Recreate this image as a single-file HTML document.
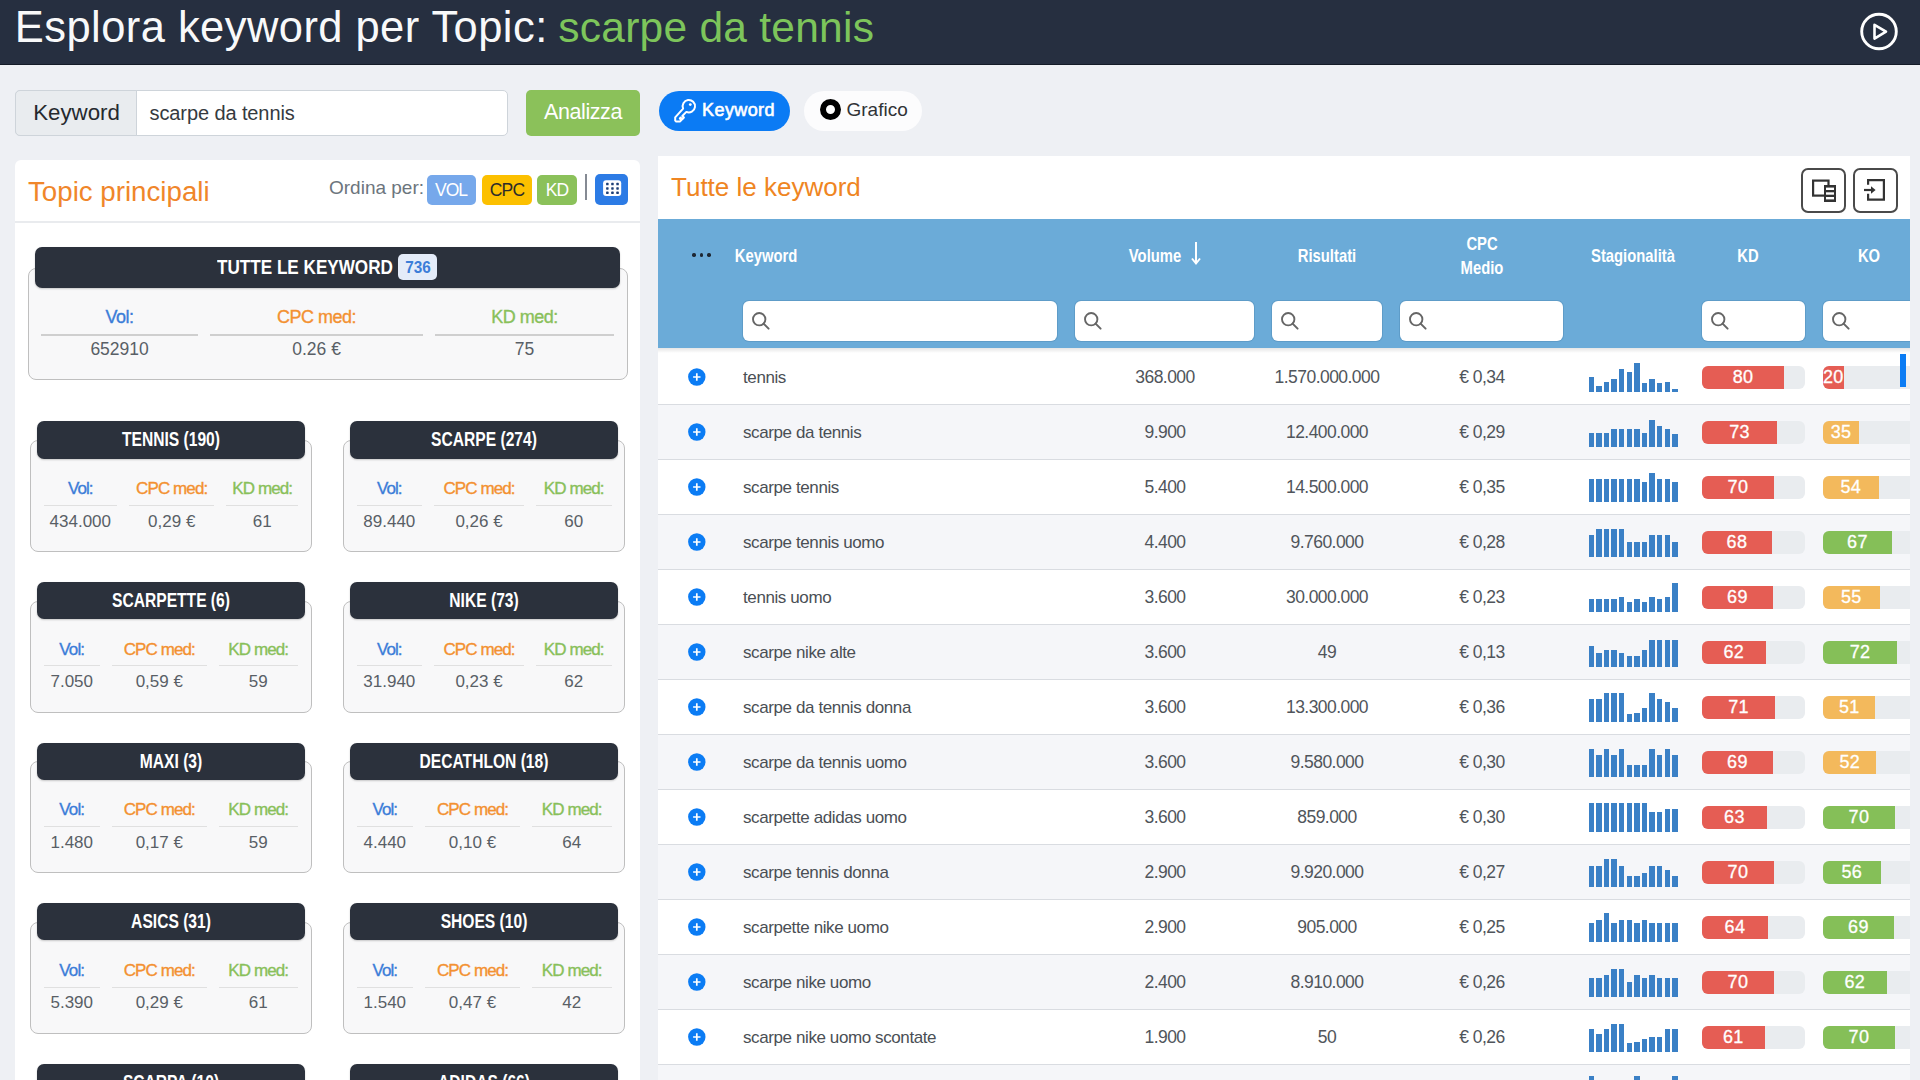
<!DOCTYPE html>
<html><head><meta charset="utf-8"><style>
html,body{margin:0;padding:0;}
body{width:1920px;height:1080px;overflow:hidden;position:relative;background:#eef0f4;font-family:"Liberation Sans", sans-serif;}
.t{position:absolute;white-space:nowrap;line-height:1;}
.r{position:absolute;}
.st{position:absolute;border-collapse:separate;}
.st td{padding:0;text-align:center;white-space:nowrap;vertical-align:top;}
</style></head><body>
<div class="r" style="left:0.0px;top:0.0px;width:1920.0px;height:64.0px;background:#262f40;"></div>
<div class="r" style="left:0.0px;top:64.0px;width:1920.0px;height:1.0px;background:#141b27;"></div>
<div class="t" style="left:14.8px;top:6.4px;font-size:43.5px;color:#f8f9fa;font-weight:normal;letter-spacing:0.44px;">Esplora keyword per Topic:</div>
<div class="t" style="left:558.3px;top:7.2px;font-size:42.5px;color:#7dc55b;font-weight:normal;letter-spacing:0.25px;">scarpe da tennis</div>
<svg class="r" style="left:1858px;top:11px" width="42" height="42" viewBox="0 0 42 42"><circle cx="21" cy="20.5" r="17.3" fill="none" stroke="#fff" stroke-width="2.9"/><path d="M16.5 13.8 L28 20.6 L16.5 27.6 Z" fill="none" stroke="#fff" stroke-width="2.6" stroke-linejoin="round"/></svg>
<div class="r" style="left:15.0px;top:90.0px;width:493.0px;height:46.0px;background:#ffffff;border:1px solid #ced4da;border-radius:5px;box-sizing:border-box;"></div>
<div class="r" style="left:15.0px;top:90.0px;width:122.0px;height:46.0px;background:#e9ecef;border:1px solid #ced4da;border-radius:5px 0 0 5px;box-sizing:border-box;"></div>
<div class="t" style="left:-23.5px;width:200px;text-align:center;top:101.9px;font-size:22.3px;color:#25292e;font-weight:normal;">Keyword</div>
<div class="t" style="left:149.5px;top:103.1px;font-size:20px;color:#353a40;font-weight:normal;letter-spacing:-0.1px;">scarpe da tennis</div>
<div class="r" style="left:526.0px;top:90.0px;width:114.0px;height:46.0px;background:#8bc15a;border-radius:5px;"></div>
<div class="t" style="left:483.0px;width:200px;text-align:center;top:101.8px;font-size:21.5px;color:#ffffff;font-weight:normal;letter-spacing:-0.4px;">Analizza</div>
<div class="r" style="left:659.0px;top:91.0px;width:131.0px;height:40.0px;background:#0b7bf4;border-radius:20px;"></div>
<svg class="r" style="left:671px;top:96.8px" width="28" height="28" viewBox="0 0 28 28"><path d="M12.10 11.64 A6.2 6.2 0 1 1 15.36 14.90 L11.29 18.96 L12.92 20.58 L11.29 22.21 L9.67 20.58 L8.82 21.43 L10.45 23.06 L8.89 24.61 L5.2 24.61 L4.2 23.6 L4.2 20.30 Z" fill="none" stroke="#fff" stroke-width="2" stroke-linejoin="round"/><circle cx="19.3" cy="7.6" r="1.4" fill="#fff"/></svg>
<div class="t" style="left:638.5px;width:200px;text-align:center;top:101.4px;font-size:18px;color:#ffffff;font-weight:normal;letter-spacing:0.4px;-webkit-text-stroke:0.6px #fff;">Keyword</div>
<div class="r" style="left:804.0px;top:91.0px;width:118.0px;height:40.0px;background:#fcfcfd;border-radius:20px;"></div>
<div class="r" style="left:819.5px;top:98.8px;width:21px;height:21px;border-radius:50%;box-sizing:border-box;border:6.5px solid #000;background:#fff"></div>
<div class="t" style="left:846.5px;top:100.4px;font-size:19px;color:#303336;font-weight:normal;">Grafico</div>
<div class="r" style="left:15.0px;top:160.0px;width:625.0px;height:940.0px;background:#ffffff;border-radius:6px;"></div>
<div class="r" style="left:15.0px;top:221.0px;width:625.0px;height:2.0px;background:#e9ebee;"></div>
<div class="t" style="left:28.0px;top:177.6px;font-size:27.7px;color:#f0862a;font-weight:normal;">Topic principali</div>
<div class="t" style="left:329.0px;top:178.4px;font-size:19px;color:#6c757d;font-weight:normal;">Ordina per:</div>
<div class="r" style="left:427.0px;top:174.5px;width:48.5px;height:30.0px;background:#76a8eb;border-radius:5px;"></div>
<div class="t" style="left:421.0px;width:60px;text-align:center;top:182.2px;font-size:17.5px;color:#ffffff;font-weight:normal;letter-spacing:-1px;">VOL</div>
<div class="r" style="left:481.5px;top:174.5px;width:50.5px;height:30.0px;background:#fcc000;border-radius:5px;"></div>
<div class="t" style="left:477.0px;width:60px;text-align:center;top:182.2px;font-size:17.5px;color:#2b2b2b;font-weight:normal;letter-spacing:-0.8px;">CPC</div>
<div class="r" style="left:537.0px;top:174.5px;width:40.0px;height:30.0px;background:#8bc15a;border-radius:5px;"></div>
<div class="t" style="left:527.0px;width:60px;text-align:center;top:182.2px;font-size:17.5px;color:#ffffff;font-weight:normal;letter-spacing:-0.8px;">KD</div>
<div class="r" style="left:585.0px;top:174.0px;width:2.0px;height:25.5px;background:#858a93;"></div>
<div class="r" style="left:595.0px;top:174.0px;width:33.0px;height:30.5px;background:#2c7be5;border-radius:5px;"></div>
<svg class="r" style="left:601px;top:179px" width="22" height="22" viewBox="0 0 22 22"><rect x="2.1" y="1.3" width="18.1" height="15.7" rx="3" fill="#fff"/><rect x="5.1" y="3.8" width="2.5" height="2.5" rx="0.6" fill="#1d3f77"/><rect x="5.1" y="8.2" width="2.5" height="2.5" rx="0.6" fill="#1d3f77"/><rect x="5.1" y="12.6" width="2.5" height="2.5" rx="0.6" fill="#1d3f77"/><rect x="10.2" y="3.8" width="2.5" height="2.5" rx="0.6" fill="#1d3f77"/><rect x="10.2" y="8.2" width="2.5" height="2.5" rx="0.6" fill="#1d3f77"/><rect x="10.2" y="12.6" width="2.5" height="2.5" rx="0.6" fill="#1d3f77"/><rect x="15.3" y="3.8" width="2.5" height="2.5" rx="0.6" fill="#1d3f77"/><rect x="15.3" y="8.2" width="2.5" height="2.5" rx="0.6" fill="#1d3f77"/><rect x="15.3" y="12.6" width="2.5" height="2.5" rx="0.6" fill="#1d3f77"/></svg>
<div class="r" style="left:27.5px;top:268.3px;width:600.0px;height:111.7px;background:#f8f8f9;border:1.5px solid #bfbfbf;border-radius:8px;box-sizing:border-box;"></div>
<div class="r" style="left:34.7px;top:247.0px;width:585.3px;height:40.5px;background:#2b313c;border-radius:7px;box-shadow:0 1px 2px rgba(0,0,0,0.2);"></div>
<div class="t" style="left:34.7px;width:585.3px;text-align:center;top:256.4px;font-size:21px;color:#fff;font-weight:bold;transform:scaleX(0.8);"></div>
<table class="st" style="left:29.0px;width:597.0px;top:308.3px;border-spacing:12px 0"><tr><td style="color:#3b7dd8;font-size:18px;line-height:18px;padding-bottom:7.4px;border-bottom:2px solid #cfcfcf;letter-spacing:-0.5px;-webkit-text-stroke:0.35px #3b7dd8">Vol:</td><td style="color:#f39131;font-size:18px;line-height:18px;padding-bottom:7.4px;border-bottom:2px solid #cfcfcf;letter-spacing:-0.5px;-webkit-text-stroke:0.35px #f39131">CPC med:</td><td style="color:#89c05a;font-size:18px;line-height:18px;padding-bottom:7.4px;border-bottom:2px solid #cfcfcf;letter-spacing:-0.5px;-webkit-text-stroke:0.35px #89c05a">KD med:</td></tr><tr><td style="color:#595f66;font-size:17.5px;line-height:17.5px;padding-top:5.5px">652910</td><td style="color:#595f66;font-size:17.5px;line-height:17.5px;padding-top:5.5px">0.26 €</td><td style="color:#595f66;font-size:17.5px;line-height:17.5px;padding-top:5.5px">75</td></tr></table>
<div class="t" style="left:216.5px;top:255.9px;font-size:21px;color:#ffffff;font-weight:bold;transform:scaleX(0.815);transform-origin:left center;">TUTTE LE KEYWORD</div>
<div class="r" style="left:398.3px;top:254.0px;width:39.2px;height:26.3px;background:#e4ecf9;border-radius:5px;"></div>
<div class="t" style="left:388.0px;width:60px;text-align:center;top:258.9px;font-size:17px;color:#3b7dd8;font-weight:bold;transform:scaleX(0.9);">736</div>
<div class="r" style="left:30.0px;top:440.2px;width:281.5px;height:112.1px;background:#f8f8f9;border:1.5px solid #bfbfbf;border-radius:8px;box-sizing:border-box;"></div>
<div class="r" style="left:37.0px;top:421.3px;width:268.0px;height:37.3px;background:#2b313c;border-radius:7px;box-shadow:0 1px 2px rgba(0,0,0,0.2);"></div>
<div class="t" style="left:37.0px;width:268.0px;text-align:center;top:429.4px;font-size:20px;color:#fff;font-weight:bold;transform:scaleX(0.78);">TENNIS (190)</div>
<table class="st" style="left:31.5px;width:278.5px;top:480.1px;border-spacing:12px 0"><tr><td style="color:#3b7dd8;font-size:17px;line-height:17px;padding-bottom:7.8px;border-bottom:1.5px solid #e0e0e0;letter-spacing:-0.9px;-webkit-text-stroke:0.35px #3b7dd8">Vol:</td><td style="color:#f39131;font-size:17px;line-height:17px;padding-bottom:7.8px;border-bottom:1.5px solid #e0e0e0;letter-spacing:-0.9px;-webkit-text-stroke:0.35px #f39131">CPC med:</td><td style="color:#89c05a;font-size:17px;line-height:17px;padding-bottom:7.8px;border-bottom:1.5px solid #e0e0e0;letter-spacing:-0.9px;-webkit-text-stroke:0.35px #89c05a">KD med:</td></tr><tr><td style="color:#595f66;font-size:17px;line-height:17px;padding-top:6.7px">434.000</td><td style="color:#595f66;font-size:17px;line-height:17px;padding-top:6.7px">0,29 €</td><td style="color:#595f66;font-size:17px;line-height:17px;padding-top:6.7px">61</td></tr></table>
<div class="r" style="left:343.0px;top:440.2px;width:282.0px;height:112.1px;background:#f8f8f9;border:1.5px solid #bfbfbf;border-radius:8px;box-sizing:border-box;"></div>
<div class="r" style="left:350.0px;top:421.3px;width:268.0px;height:37.3px;background:#2b313c;border-radius:7px;box-shadow:0 1px 2px rgba(0,0,0,0.2);"></div>
<div class="t" style="left:350.0px;width:268.0px;text-align:center;top:429.4px;font-size:20px;color:#fff;font-weight:bold;transform:scaleX(0.78);">SCARPE (274)</div>
<table class="st" style="left:344.5px;width:279.0px;top:480.1px;border-spacing:12px 0"><tr><td style="color:#3b7dd8;font-size:17px;line-height:17px;padding-bottom:7.8px;border-bottom:1.5px solid #e0e0e0;letter-spacing:-0.9px;-webkit-text-stroke:0.35px #3b7dd8">Vol:</td><td style="color:#f39131;font-size:17px;line-height:17px;padding-bottom:7.8px;border-bottom:1.5px solid #e0e0e0;letter-spacing:-0.9px;-webkit-text-stroke:0.35px #f39131">CPC med:</td><td style="color:#89c05a;font-size:17px;line-height:17px;padding-bottom:7.8px;border-bottom:1.5px solid #e0e0e0;letter-spacing:-0.9px;-webkit-text-stroke:0.35px #89c05a">KD med:</td></tr><tr><td style="color:#595f66;font-size:17px;line-height:17px;padding-top:6.7px">89.440</td><td style="color:#595f66;font-size:17px;line-height:17px;padding-top:6.7px">0,26 €</td><td style="color:#595f66;font-size:17px;line-height:17px;padding-top:6.7px">60</td></tr></table>
<div class="r" style="left:30.0px;top:600.8px;width:281.5px;height:112.1px;background:#f8f8f9;border:1.5px solid #bfbfbf;border-radius:8px;box-sizing:border-box;"></div>
<div class="r" style="left:37.0px;top:581.9px;width:268.0px;height:37.3px;background:#2b313c;border-radius:7px;box-shadow:0 1px 2px rgba(0,0,0,0.2);"></div>
<div class="t" style="left:37.0px;width:268.0px;text-align:center;top:590.0px;font-size:20px;color:#fff;font-weight:bold;transform:scaleX(0.78);">SCARPETTE (6)</div>
<table class="st" style="left:31.5px;width:278.5px;top:640.7px;border-spacing:12px 0"><tr><td style="color:#3b7dd8;font-size:17px;line-height:17px;padding-bottom:7.8px;border-bottom:1.5px solid #e0e0e0;letter-spacing:-0.9px;-webkit-text-stroke:0.35px #3b7dd8">Vol:</td><td style="color:#f39131;font-size:17px;line-height:17px;padding-bottom:7.8px;border-bottom:1.5px solid #e0e0e0;letter-spacing:-0.9px;-webkit-text-stroke:0.35px #f39131">CPC med:</td><td style="color:#89c05a;font-size:17px;line-height:17px;padding-bottom:7.8px;border-bottom:1.5px solid #e0e0e0;letter-spacing:-0.9px;-webkit-text-stroke:0.35px #89c05a">KD med:</td></tr><tr><td style="color:#595f66;font-size:17px;line-height:17px;padding-top:6.7px">7.050</td><td style="color:#595f66;font-size:17px;line-height:17px;padding-top:6.7px">0,59 €</td><td style="color:#595f66;font-size:17px;line-height:17px;padding-top:6.7px">59</td></tr></table>
<div class="r" style="left:343.0px;top:600.8px;width:282.0px;height:112.1px;background:#f8f8f9;border:1.5px solid #bfbfbf;border-radius:8px;box-sizing:border-box;"></div>
<div class="r" style="left:350.0px;top:581.9px;width:268.0px;height:37.3px;background:#2b313c;border-radius:7px;box-shadow:0 1px 2px rgba(0,0,0,0.2);"></div>
<div class="t" style="left:350.0px;width:268.0px;text-align:center;top:590.0px;font-size:20px;color:#fff;font-weight:bold;transform:scaleX(0.78);">NIKE (73)</div>
<table class="st" style="left:344.5px;width:279.0px;top:640.7px;border-spacing:12px 0"><tr><td style="color:#3b7dd8;font-size:17px;line-height:17px;padding-bottom:7.8px;border-bottom:1.5px solid #e0e0e0;letter-spacing:-0.9px;-webkit-text-stroke:0.35px #3b7dd8">Vol:</td><td style="color:#f39131;font-size:17px;line-height:17px;padding-bottom:7.8px;border-bottom:1.5px solid #e0e0e0;letter-spacing:-0.9px;-webkit-text-stroke:0.35px #f39131">CPC med:</td><td style="color:#89c05a;font-size:17px;line-height:17px;padding-bottom:7.8px;border-bottom:1.5px solid #e0e0e0;letter-spacing:-0.9px;-webkit-text-stroke:0.35px #89c05a">KD med:</td></tr><tr><td style="color:#595f66;font-size:17px;line-height:17px;padding-top:6.7px">31.940</td><td style="color:#595f66;font-size:17px;line-height:17px;padding-top:6.7px">0,23 €</td><td style="color:#595f66;font-size:17px;line-height:17px;padding-top:6.7px">62</td></tr></table>
<div class="r" style="left:30.0px;top:761.4px;width:281.5px;height:112.1px;background:#f8f8f9;border:1.5px solid #bfbfbf;border-radius:8px;box-sizing:border-box;"></div>
<div class="r" style="left:37.0px;top:742.5px;width:268.0px;height:37.3px;background:#2b313c;border-radius:7px;box-shadow:0 1px 2px rgba(0,0,0,0.2);"></div>
<div class="t" style="left:37.0px;width:268.0px;text-align:center;top:750.6px;font-size:20px;color:#fff;font-weight:bold;transform:scaleX(0.78);">MAXI (3)</div>
<table class="st" style="left:31.5px;width:278.5px;top:801.3px;border-spacing:12px 0"><tr><td style="color:#3b7dd8;font-size:17px;line-height:17px;padding-bottom:7.8px;border-bottom:1.5px solid #e0e0e0;letter-spacing:-0.9px;-webkit-text-stroke:0.35px #3b7dd8">Vol:</td><td style="color:#f39131;font-size:17px;line-height:17px;padding-bottom:7.8px;border-bottom:1.5px solid #e0e0e0;letter-spacing:-0.9px;-webkit-text-stroke:0.35px #f39131">CPC med:</td><td style="color:#89c05a;font-size:17px;line-height:17px;padding-bottom:7.8px;border-bottom:1.5px solid #e0e0e0;letter-spacing:-0.9px;-webkit-text-stroke:0.35px #89c05a">KD med:</td></tr><tr><td style="color:#595f66;font-size:17px;line-height:17px;padding-top:6.7px">1.480</td><td style="color:#595f66;font-size:17px;line-height:17px;padding-top:6.7px">0,17 €</td><td style="color:#595f66;font-size:17px;line-height:17px;padding-top:6.7px">59</td></tr></table>
<div class="r" style="left:343.0px;top:761.4px;width:282.0px;height:112.1px;background:#f8f8f9;border:1.5px solid #bfbfbf;border-radius:8px;box-sizing:border-box;"></div>
<div class="r" style="left:350.0px;top:742.5px;width:268.0px;height:37.3px;background:#2b313c;border-radius:7px;box-shadow:0 1px 2px rgba(0,0,0,0.2);"></div>
<div class="t" style="left:350.0px;width:268.0px;text-align:center;top:750.6px;font-size:20px;color:#fff;font-weight:bold;transform:scaleX(0.78);">DECATHLON (18)</div>
<table class="st" style="left:344.5px;width:279.0px;top:801.3px;border-spacing:12px 0"><tr><td style="color:#3b7dd8;font-size:17px;line-height:17px;padding-bottom:7.8px;border-bottom:1.5px solid #e0e0e0;letter-spacing:-0.9px;-webkit-text-stroke:0.35px #3b7dd8">Vol:</td><td style="color:#f39131;font-size:17px;line-height:17px;padding-bottom:7.8px;border-bottom:1.5px solid #e0e0e0;letter-spacing:-0.9px;-webkit-text-stroke:0.35px #f39131">CPC med:</td><td style="color:#89c05a;font-size:17px;line-height:17px;padding-bottom:7.8px;border-bottom:1.5px solid #e0e0e0;letter-spacing:-0.9px;-webkit-text-stroke:0.35px #89c05a">KD med:</td></tr><tr><td style="color:#595f66;font-size:17px;line-height:17px;padding-top:6.7px">4.440</td><td style="color:#595f66;font-size:17px;line-height:17px;padding-top:6.7px">0,10 €</td><td style="color:#595f66;font-size:17px;line-height:17px;padding-top:6.7px">64</td></tr></table>
<div class="r" style="left:30.0px;top:922.0px;width:281.5px;height:112.1px;background:#f8f8f9;border:1.5px solid #bfbfbf;border-radius:8px;box-sizing:border-box;"></div>
<div class="r" style="left:37.0px;top:903.1px;width:268.0px;height:37.3px;background:#2b313c;border-radius:7px;box-shadow:0 1px 2px rgba(0,0,0,0.2);"></div>
<div class="t" style="left:37.0px;width:268.0px;text-align:center;top:911.2px;font-size:20px;color:#fff;font-weight:bold;transform:scaleX(0.78);">ASICS (31)</div>
<table class="st" style="left:31.5px;width:278.5px;top:961.9px;border-spacing:12px 0"><tr><td style="color:#3b7dd8;font-size:17px;line-height:17px;padding-bottom:7.8px;border-bottom:1.5px solid #e0e0e0;letter-spacing:-0.9px;-webkit-text-stroke:0.35px #3b7dd8">Vol:</td><td style="color:#f39131;font-size:17px;line-height:17px;padding-bottom:7.8px;border-bottom:1.5px solid #e0e0e0;letter-spacing:-0.9px;-webkit-text-stroke:0.35px #f39131">CPC med:</td><td style="color:#89c05a;font-size:17px;line-height:17px;padding-bottom:7.8px;border-bottom:1.5px solid #e0e0e0;letter-spacing:-0.9px;-webkit-text-stroke:0.35px #89c05a">KD med:</td></tr><tr><td style="color:#595f66;font-size:17px;line-height:17px;padding-top:6.7px">5.390</td><td style="color:#595f66;font-size:17px;line-height:17px;padding-top:6.7px">0,29 €</td><td style="color:#595f66;font-size:17px;line-height:17px;padding-top:6.7px">61</td></tr></table>
<div class="r" style="left:343.0px;top:922.0px;width:282.0px;height:112.1px;background:#f8f8f9;border:1.5px solid #bfbfbf;border-radius:8px;box-sizing:border-box;"></div>
<div class="r" style="left:350.0px;top:903.1px;width:268.0px;height:37.3px;background:#2b313c;border-radius:7px;box-shadow:0 1px 2px rgba(0,0,0,0.2);"></div>
<div class="t" style="left:350.0px;width:268.0px;text-align:center;top:911.2px;font-size:20px;color:#fff;font-weight:bold;transform:scaleX(0.78);">SHOES (10)</div>
<table class="st" style="left:344.5px;width:279.0px;top:961.9px;border-spacing:12px 0"><tr><td style="color:#3b7dd8;font-size:17px;line-height:17px;padding-bottom:7.8px;border-bottom:1.5px solid #e0e0e0;letter-spacing:-0.9px;-webkit-text-stroke:0.35px #3b7dd8">Vol:</td><td style="color:#f39131;font-size:17px;line-height:17px;padding-bottom:7.8px;border-bottom:1.5px solid #e0e0e0;letter-spacing:-0.9px;-webkit-text-stroke:0.35px #f39131">CPC med:</td><td style="color:#89c05a;font-size:17px;line-height:17px;padding-bottom:7.8px;border-bottom:1.5px solid #e0e0e0;letter-spacing:-0.9px;-webkit-text-stroke:0.35px #89c05a">KD med:</td></tr><tr><td style="color:#595f66;font-size:17px;line-height:17px;padding-top:6.7px">1.540</td><td style="color:#595f66;font-size:17px;line-height:17px;padding-top:6.7px">0,47 €</td><td style="color:#595f66;font-size:17px;line-height:17px;padding-top:6.7px">42</td></tr></table>
<div class="r" style="left:30.0px;top:1082.6px;width:281.5px;height:112.1px;background:#f8f8f9;border:1.5px solid #bfbfbf;border-radius:8px;box-sizing:border-box;"></div>
<div class="r" style="left:37.0px;top:1063.7px;width:268.0px;height:37.3px;background:#2b313c;border-radius:7px;box-shadow:0 1px 2px rgba(0,0,0,0.2);"></div>
<div class="t" style="left:37.0px;width:268.0px;text-align:center;top:1071.8px;font-size:20px;color:#fff;font-weight:bold;transform:scaleX(0.78);">SCARPA (10)</div>
<table class="st" style="left:31.5px;width:278.5px;top:1122.5px;border-spacing:12px 0"><tr><td style="color:#3b7dd8;font-size:17px;line-height:17px;padding-bottom:7.8px;border-bottom:1.5px solid #e0e0e0;letter-spacing:-0.9px;-webkit-text-stroke:0.35px #3b7dd8">Vol:</td><td style="color:#f39131;font-size:17px;line-height:17px;padding-bottom:7.8px;border-bottom:1.5px solid #e0e0e0;letter-spacing:-0.9px;-webkit-text-stroke:0.35px #f39131">CPC med:</td><td style="color:#89c05a;font-size:17px;line-height:17px;padding-bottom:7.8px;border-bottom:1.5px solid #e0e0e0;letter-spacing:-0.9px;-webkit-text-stroke:0.35px #89c05a">KD med:</td></tr><tr><td style="color:#595f66;font-size:17px;line-height:17px;padding-top:6.7px"></td><td style="color:#595f66;font-size:17px;line-height:17px;padding-top:6.7px"></td><td style="color:#595f66;font-size:17px;line-height:17px;padding-top:6.7px"></td></tr></table>
<div class="r" style="left:343.0px;top:1082.6px;width:282.0px;height:112.1px;background:#f8f8f9;border:1.5px solid #bfbfbf;border-radius:8px;box-sizing:border-box;"></div>
<div class="r" style="left:350.0px;top:1063.7px;width:268.0px;height:37.3px;background:#2b313c;border-radius:7px;box-shadow:0 1px 2px rgba(0,0,0,0.2);"></div>
<div class="t" style="left:350.0px;width:268.0px;text-align:center;top:1071.8px;font-size:20px;color:#fff;font-weight:bold;transform:scaleX(0.78);">ADIDAS (66)</div>
<table class="st" style="left:344.5px;width:279.0px;top:1122.5px;border-spacing:12px 0"><tr><td style="color:#3b7dd8;font-size:17px;line-height:17px;padding-bottom:7.8px;border-bottom:1.5px solid #e0e0e0;letter-spacing:-0.9px;-webkit-text-stroke:0.35px #3b7dd8">Vol:</td><td style="color:#f39131;font-size:17px;line-height:17px;padding-bottom:7.8px;border-bottom:1.5px solid #e0e0e0;letter-spacing:-0.9px;-webkit-text-stroke:0.35px #f39131">CPC med:</td><td style="color:#89c05a;font-size:17px;line-height:17px;padding-bottom:7.8px;border-bottom:1.5px solid #e0e0e0;letter-spacing:-0.9px;-webkit-text-stroke:0.35px #89c05a">KD med:</td></tr><tr><td style="color:#595f66;font-size:17px;line-height:17px;padding-top:6.7px"></td><td style="color:#595f66;font-size:17px;line-height:17px;padding-top:6.7px"></td><td style="color:#595f66;font-size:17px;line-height:17px;padding-top:6.7px"></td></tr></table>
<div class="r" style="left:658.0px;top:156.0px;width:1252.0px;height:944.0px;background:#ffffff;"></div>
<div class="t" style="left:671.0px;top:173.5px;font-size:26px;color:#ef8522;font-weight:normal;">Tutte le keyword</div>
<div class="r" style="left:1801.0px;top:168.0px;width:45.0px;height:45.0px;background:transparent;border:2px solid #4a4a4a;border-radius:7px;box-sizing:border-box;"></div>
<div class="r" style="left:1853.3px;top:168.0px;width:45.0px;height:45.0px;background:transparent;border:2px solid #4a4a4a;border-radius:7px;box-sizing:border-box;"></div>
<svg class="r" style="left:1800px;top:160px" width="110" height="60" viewBox="1800 160 110 60"><rect x="1813.1" y="180.6" width="15.4" height="15" fill="none" stroke="#333" stroke-width="2.2"/><rect x="1824" y="185" width="12" height="17" fill="#333"/><rect x="1826" y="187.6" width="8" height="2.4" fill="#fff"/><rect x="1826" y="192.3" width="8" height="2.4" fill="#fff"/><rect x="1826" y="197" width="8" height="2.4" fill="#fff"/><path d="M1868.1 184.8 V180.1 H1883.9 V199.6 H1868.1 V193.7" fill="none" stroke="#333" stroke-width="2.2"/><path d="M1864 190 H1872" stroke="#333" stroke-width="2.2"/><path d="M1871 186.2 L1875.6 190 L1871 193.8 Z" fill="#333"/></svg>
<div class="r" style="left:658.0px;top:219.0px;width:1252.0px;height:129.0px;background:#6babd8;"></div>
<div class="t" style="left:665.5px;width:200px;text-align:center;top:247.0px;font-size:18.5px;color:#ffffff;font-weight:bold;transform:scaleX(0.8);">Keyword</div>
<div class="t" style="left:1054.5px;width:200px;text-align:center;top:247.0px;font-size:18.5px;color:#ffffff;font-weight:bold;transform:scaleX(0.8);">Volume</div>
<svg class="r" style="left:1190px;top:240px" width="12" height="26" viewBox="0 0 12 26"><path d="M6 2 V23 M2 18.5 L6 23.5 L10 18.5" fill="none" stroke="#fff" stroke-width="2"/></svg>
<div class="t" style="left:1227.0px;width:200px;text-align:center;top:247.0px;font-size:18.5px;color:#ffffff;font-weight:bold;transform:scaleX(0.8);">Risultati</div>
<div class="t" style="left:1382.0px;width:200px;text-align:center;top:235.0px;font-size:18.5px;color:#ffffff;font-weight:bold;transform:scaleX(0.8);">CPC</div>
<div class="t" style="left:1382.0px;width:200px;text-align:center;top:259.0px;font-size:18.5px;color:#ffffff;font-weight:bold;transform:scaleX(0.8);">Medio</div>
<div class="t" style="left:1532.7px;width:200px;text-align:center;top:247.0px;font-size:18.5px;color:#ffffff;font-weight:bold;transform:scaleX(0.8);">Stagionalità</div>
<div class="t" style="left:1648.0px;width:200px;text-align:center;top:247.0px;font-size:18.5px;color:#ffffff;font-weight:bold;transform:scaleX(0.8);">KD</div>
<div class="t" style="left:1768.7px;width:200px;text-align:center;top:247.0px;font-size:18.5px;color:#ffffff;font-weight:bold;transform:scaleX(0.8);">KO</div>
<div class="r" style="left:692.2px;top:253.2px;width:3.4px;height:3.4px;background:#1d2733;border-radius:50%;"></div>
<div class="r" style="left:699.8px;top:253.2px;width:3.4px;height:3.4px;background:#1d2733;border-radius:50%;"></div>
<div class="r" style="left:707.4px;top:253.2px;width:3.4px;height:3.4px;background:#1d2733;border-radius:50%;"></div>
<div class="r" style="left:742.5px;top:301.0px;width:314.5px;height:40.2px;background:#ffffff;border-radius:6px;box-shadow:0 0 0 1px rgba(40,90,130,0.18);"></div>
<svg class="r" style="left:749.7px;top:310px" width="22" height="22" viewBox="0 0 22 22"><circle cx="9.2" cy="9.2" r="6.2" fill="none" stroke="#666" stroke-width="1.9"/><path d="M13.6 13.6 L18.6 18.6" stroke="#666" stroke-width="2" stroke-linecap="round"/></svg>
<div class="r" style="left:1075.0px;top:301.0px;width:179.0px;height:40.2px;background:#ffffff;border-radius:6px;box-shadow:0 0 0 1px rgba(40,90,130,0.18);"></div>
<svg class="r" style="left:1082.2px;top:310px" width="22" height="22" viewBox="0 0 22 22"><circle cx="9.2" cy="9.2" r="6.2" fill="none" stroke="#666" stroke-width="1.9"/><path d="M13.6 13.6 L18.6 18.6" stroke="#666" stroke-width="2" stroke-linecap="round"/></svg>
<div class="r" style="left:1272.0px;top:301.0px;width:110.0px;height:40.2px;background:#ffffff;border-radius:6px;box-shadow:0 0 0 1px rgba(40,90,130,0.18);"></div>
<svg class="r" style="left:1279.2px;top:310px" width="22" height="22" viewBox="0 0 22 22"><circle cx="9.2" cy="9.2" r="6.2" fill="none" stroke="#666" stroke-width="1.9"/><path d="M13.6 13.6 L18.6 18.6" stroke="#666" stroke-width="2" stroke-linecap="round"/></svg>
<div class="r" style="left:1400.0px;top:301.0px;width:163.0px;height:40.2px;background:#ffffff;border-radius:6px;box-shadow:0 0 0 1px rgba(40,90,130,0.18);"></div>
<svg class="r" style="left:1407.2px;top:310px" width="22" height="22" viewBox="0 0 22 22"><circle cx="9.2" cy="9.2" r="6.2" fill="none" stroke="#666" stroke-width="1.9"/><path d="M13.6 13.6 L18.6 18.6" stroke="#666" stroke-width="2" stroke-linecap="round"/></svg>
<div class="r" style="left:1702.0px;top:301.0px;width:103.0px;height:40.2px;background:#ffffff;border-radius:6px;box-shadow:0 0 0 1px rgba(40,90,130,0.18);"></div>
<svg class="r" style="left:1709.2px;top:310px" width="22" height="22" viewBox="0 0 22 22"><circle cx="9.2" cy="9.2" r="6.2" fill="none" stroke="#666" stroke-width="1.9"/><path d="M13.6 13.6 L18.6 18.6" stroke="#666" stroke-width="2" stroke-linecap="round"/></svg>
<div class="r" style="left:1823.0px;top:301.0px;width:137.0px;height:40.2px;background:#ffffff;border-radius:6px;box-shadow:0 0 0 1px rgba(40,90,130,0.18);"></div>
<svg class="r" style="left:1830.2px;top:310px" width="22" height="22" viewBox="0 0 22 22"><circle cx="9.2" cy="9.2" r="6.2" fill="none" stroke="#666" stroke-width="1.9"/><path d="M13.6 13.6 L18.6 18.6" stroke="#666" stroke-width="2" stroke-linecap="round"/></svg>
<div class="r" style="left:658.0px;top:349.1px;width:1252.0px;height:55.0px;background:#ffffff;"></div>
<svg class="r" style="left:688.0px;top:368.0px" width="18" height="18" viewBox="0 0 18 18"><circle cx="8.8" cy="9" r="8.7" fill="#0b7cf4"/><path d="M8.8 5.3 V12.7 M5.1 9 H12.5" stroke="#fff" stroke-width="1.7"/></svg>
<div class="t" style="left:743.0px;top:369.0px;font-size:17px;color:#4a4f55;font-weight:normal;letter-spacing:-0.4px;">tennis</div>
<div class="t" style="left:1065.0px;width:200px;text-align:center;top:369.2px;font-size:17.5px;color:#50555b;font-weight:normal;letter-spacing:-0.55px;">368.000</div>
<div class="t" style="left:1227.0px;width:200px;text-align:center;top:369.2px;font-size:17.5px;color:#50555b;font-weight:normal;letter-spacing:-0.55px;">1.570.000.000</div>
<div class="t" style="left:1382.0px;width:200px;text-align:center;top:369.2px;font-size:17.5px;color:#50555b;font-weight:normal;letter-spacing:-0.55px;">€ 0,34</div>
<div class="r" style="left:1588.5px;top:376.5px;width:5.6px;height:15.3px;background:#3a80c6;"></div>
<div class="r" style="left:1596.1px;top:386.3px;width:5.6px;height:5.5px;background:#3a80c6;"></div>
<div class="r" style="left:1603.7px;top:381.6px;width:5.6px;height:10.2px;background:#3a80c6;"></div>
<div class="r" style="left:1611.3px;top:378.6px;width:5.6px;height:13.2px;background:#3a80c6;"></div>
<div class="r" style="left:1618.9px;top:369.0px;width:5.6px;height:22.8px;background:#3a80c6;"></div>
<div class="r" style="left:1626.5px;top:372.4px;width:5.6px;height:19.4px;background:#3a80c6;"></div>
<div class="r" style="left:1634.1px;top:363.3px;width:5.6px;height:28.5px;background:#3a80c6;"></div>
<div class="r" style="left:1641.7px;top:382.6px;width:5.6px;height:9.2px;background:#3a80c6;"></div>
<div class="r" style="left:1649.3px;top:378.6px;width:5.6px;height:13.2px;background:#3a80c6;"></div>
<div class="r" style="left:1656.9px;top:382.6px;width:5.6px;height:9.2px;background:#3a80c6;"></div>
<div class="r" style="left:1664.5px;top:381.6px;width:5.6px;height:10.2px;background:#3a80c6;"></div>
<div class="r" style="left:1672.1px;top:389.2px;width:5.6px;height:2.6px;background:#3a80c6;"></div>
<div class="r" style="left:1702.0px;top:366.2px;width:102.7px;height:22.7px;background:#e9ecef;border-radius:6px;"></div>
<div class="r" style="left:1702.0px;top:366.2px;width:82.2px;height:22.7px;background:#e55d54;border-radius:6px 0 0 6px;"></div>
<div class="t" style="left:1693.1px;width:100px;text-align:center;top:368.1px;font-size:18px;color:#ffffff;font-weight:normal;letter-spacing:0.3px;-webkit-text-stroke:0.3px #fff;">80</div>
<div class="r" style="left:1823.0px;top:366.2px;width:102.7px;height:22.7px;background:#e9ecef;border-radius:6px;"></div>
<div class="r" style="left:1823.0px;top:366.2px;width:20.5px;height:22.7px;background:#e55d54;border-radius:6px 0 0 6px;"></div>
<div class="t" style="left:1783.3px;width:100px;text-align:center;top:368.1px;font-size:18px;color:#ffffff;font-weight:normal;letter-spacing:0.3px;-webkit-text-stroke:0.3px #fff;">20</div>
<div class="r" style="left:658.0px;top:404.1px;width:1252.0px;height:55.0px;background:#f5f6f9;"></div>
<svg class="r" style="left:688.0px;top:423.0px" width="18" height="18" viewBox="0 0 18 18"><circle cx="8.8" cy="9" r="8.7" fill="#0b7cf4"/><path d="M8.8 5.3 V12.7 M5.1 9 H12.5" stroke="#fff" stroke-width="1.7"/></svg>
<div class="t" style="left:743.0px;top:424.0px;font-size:17px;color:#4a4f55;font-weight:normal;letter-spacing:-0.4px;">scarpe da tennis</div>
<div class="t" style="left:1065.0px;width:200px;text-align:center;top:424.2px;font-size:17.5px;color:#50555b;font-weight:normal;letter-spacing:-0.55px;">9.900</div>
<div class="t" style="left:1227.0px;width:200px;text-align:center;top:424.2px;font-size:17.5px;color:#50555b;font-weight:normal;letter-spacing:-0.55px;">12.400.000</div>
<div class="t" style="left:1382.0px;width:200px;text-align:center;top:424.2px;font-size:17.5px;color:#50555b;font-weight:normal;letter-spacing:-0.55px;">€ 0,29</div>
<div class="r" style="left:1588.5px;top:432.9px;width:5.6px;height:13.9px;background:#3a80c6;"></div>
<div class="r" style="left:1596.1px;top:432.9px;width:5.6px;height:13.9px;background:#3a80c6;"></div>
<div class="r" style="left:1603.7px;top:432.9px;width:5.6px;height:13.9px;background:#3a80c6;"></div>
<div class="r" style="left:1611.3px;top:428.5px;width:5.6px;height:18.3px;background:#3a80c6;"></div>
<div class="r" style="left:1618.9px;top:428.5px;width:5.6px;height:18.3px;background:#3a80c6;"></div>
<div class="r" style="left:1626.5px;top:428.5px;width:5.6px;height:18.3px;background:#3a80c6;"></div>
<div class="r" style="left:1634.1px;top:428.5px;width:5.6px;height:18.3px;background:#3a80c6;"></div>
<div class="r" style="left:1641.7px;top:432.9px;width:5.6px;height:13.9px;background:#3a80c6;"></div>
<div class="r" style="left:1649.3px;top:419.9px;width:5.6px;height:26.9px;background:#3a80c6;"></div>
<div class="r" style="left:1656.9px;top:425.6px;width:5.6px;height:21.2px;background:#3a80c6;"></div>
<div class="r" style="left:1664.5px;top:428.5px;width:5.6px;height:18.3px;background:#3a80c6;"></div>
<div class="r" style="left:1672.1px;top:434.2px;width:5.6px;height:12.6px;background:#3a80c6;"></div>
<div class="r" style="left:1702.0px;top:421.2px;width:102.7px;height:22.7px;background:#e9ecef;border-radius:6px;"></div>
<div class="r" style="left:1702.0px;top:421.2px;width:75.0px;height:22.7px;background:#e55d54;border-radius:6px 0 0 6px;"></div>
<div class="t" style="left:1689.5px;width:100px;text-align:center;top:423.1px;font-size:18px;color:#ffffff;font-weight:normal;letter-spacing:0.3px;-webkit-text-stroke:0.3px #fff;">73</div>
<div class="r" style="left:1823.0px;top:421.2px;width:102.7px;height:22.7px;background:#e9ecef;border-radius:6px;"></div>
<div class="r" style="left:1823.0px;top:421.2px;width:35.9px;height:22.7px;background:#f3b95c;border-radius:6px 0 0 6px;"></div>
<div class="t" style="left:1791.0px;width:100px;text-align:center;top:423.1px;font-size:18px;color:#ffffff;font-weight:normal;letter-spacing:0.3px;-webkit-text-stroke:0.3px #fff;">35</div>
<div class="r" style="left:658.0px;top:459.1px;width:1252.0px;height:55.0px;background:#ffffff;"></div>
<svg class="r" style="left:688.0px;top:478.0px" width="18" height="18" viewBox="0 0 18 18"><circle cx="8.8" cy="9" r="8.7" fill="#0b7cf4"/><path d="M8.8 5.3 V12.7 M5.1 9 H12.5" stroke="#fff" stroke-width="1.7"/></svg>
<div class="t" style="left:743.0px;top:479.0px;font-size:17px;color:#4a4f55;font-weight:normal;letter-spacing:-0.4px;">scarpe tennis</div>
<div class="t" style="left:1065.0px;width:200px;text-align:center;top:479.2px;font-size:17.5px;color:#50555b;font-weight:normal;letter-spacing:-0.55px;">5.400</div>
<div class="t" style="left:1227.0px;width:200px;text-align:center;top:479.2px;font-size:17.5px;color:#50555b;font-weight:normal;letter-spacing:-0.55px;">14.500.000</div>
<div class="t" style="left:1382.0px;width:200px;text-align:center;top:479.2px;font-size:17.5px;color:#50555b;font-weight:normal;letter-spacing:-0.55px;">€ 0,35</div>
<div class="r" style="left:1588.5px;top:479.0px;width:5.6px;height:22.8px;background:#3a80c6;"></div>
<div class="r" style="left:1596.1px;top:479.0px;width:5.6px;height:22.8px;background:#3a80c6;"></div>
<div class="r" style="left:1603.7px;top:479.0px;width:5.6px;height:22.8px;background:#3a80c6;"></div>
<div class="r" style="left:1611.3px;top:479.0px;width:5.6px;height:22.8px;background:#3a80c6;"></div>
<div class="r" style="left:1618.9px;top:479.0px;width:5.6px;height:22.8px;background:#3a80c6;"></div>
<div class="r" style="left:1626.5px;top:479.0px;width:5.6px;height:22.8px;background:#3a80c6;"></div>
<div class="r" style="left:1634.1px;top:479.0px;width:5.6px;height:22.8px;background:#3a80c6;"></div>
<div class="r" style="left:1641.7px;top:482.4px;width:5.6px;height:19.4px;background:#3a80c6;"></div>
<div class="r" style="left:1649.3px;top:472.9px;width:5.6px;height:28.9px;background:#3a80c6;"></div>
<div class="r" style="left:1656.9px;top:479.0px;width:5.6px;height:22.8px;background:#3a80c6;"></div>
<div class="r" style="left:1664.5px;top:479.0px;width:5.6px;height:22.8px;background:#3a80c6;"></div>
<div class="r" style="left:1672.1px;top:482.4px;width:5.6px;height:19.4px;background:#3a80c6;"></div>
<div class="r" style="left:1702.0px;top:476.2px;width:102.7px;height:22.7px;background:#e9ecef;border-radius:6px;"></div>
<div class="r" style="left:1702.0px;top:476.2px;width:71.9px;height:22.7px;background:#e55d54;border-radius:6px 0 0 6px;"></div>
<div class="t" style="left:1687.9px;width:100px;text-align:center;top:478.1px;font-size:18px;color:#ffffff;font-weight:normal;letter-spacing:0.3px;-webkit-text-stroke:0.3px #fff;">70</div>
<div class="r" style="left:1823.0px;top:476.2px;width:102.7px;height:22.7px;background:#e9ecef;border-radius:6px;"></div>
<div class="r" style="left:1823.0px;top:476.2px;width:55.5px;height:22.7px;background:#f3b95c;border-radius:6px 0 0 6px;"></div>
<div class="t" style="left:1800.7px;width:100px;text-align:center;top:478.1px;font-size:18px;color:#ffffff;font-weight:normal;letter-spacing:0.3px;-webkit-text-stroke:0.3px #fff;">54</div>
<div class="r" style="left:658.0px;top:514.1px;width:1252.0px;height:55.0px;background:#f5f6f9;"></div>
<svg class="r" style="left:688.0px;top:533.0px" width="18" height="18" viewBox="0 0 18 18"><circle cx="8.8" cy="9" r="8.7" fill="#0b7cf4"/><path d="M8.8 5.3 V12.7 M5.1 9 H12.5" stroke="#fff" stroke-width="1.7"/></svg>
<div class="t" style="left:743.0px;top:534.0px;font-size:17px;color:#4a4f55;font-weight:normal;letter-spacing:-0.4px;">scarpe tennis uomo</div>
<div class="t" style="left:1065.0px;width:200px;text-align:center;top:534.2px;font-size:17.5px;color:#50555b;font-weight:normal;letter-spacing:-0.55px;">4.400</div>
<div class="t" style="left:1227.0px;width:200px;text-align:center;top:534.2px;font-size:17.5px;color:#50555b;font-weight:normal;letter-spacing:-0.55px;">9.760.000</div>
<div class="t" style="left:1382.0px;width:200px;text-align:center;top:534.2px;font-size:17.5px;color:#50555b;font-weight:normal;letter-spacing:-0.55px;">€ 0,28</div>
<div class="r" style="left:1588.5px;top:535.0px;width:5.6px;height:21.8px;background:#3a80c6;"></div>
<div class="r" style="left:1596.1px;top:529.3px;width:5.6px;height:27.5px;background:#3a80c6;"></div>
<div class="r" style="left:1603.7px;top:529.3px;width:5.6px;height:27.5px;background:#3a80c6;"></div>
<div class="r" style="left:1611.3px;top:529.3px;width:5.6px;height:27.5px;background:#3a80c6;"></div>
<div class="r" style="left:1618.9px;top:529.3px;width:5.6px;height:27.5px;background:#3a80c6;"></div>
<div class="r" style="left:1626.5px;top:542.1px;width:5.6px;height:14.7px;background:#3a80c6;"></div>
<div class="r" style="left:1634.1px;top:542.1px;width:5.6px;height:14.7px;background:#3a80c6;"></div>
<div class="r" style="left:1641.7px;top:542.1px;width:5.6px;height:14.7px;background:#3a80c6;"></div>
<div class="r" style="left:1649.3px;top:535.0px;width:5.6px;height:21.8px;background:#3a80c6;"></div>
<div class="r" style="left:1656.9px;top:535.0px;width:5.6px;height:21.8px;background:#3a80c6;"></div>
<div class="r" style="left:1664.5px;top:535.0px;width:5.6px;height:21.8px;background:#3a80c6;"></div>
<div class="r" style="left:1672.1px;top:542.1px;width:5.6px;height:14.7px;background:#3a80c6;"></div>
<div class="r" style="left:1702.0px;top:531.2px;width:102.7px;height:22.7px;background:#e9ecef;border-radius:6px;"></div>
<div class="r" style="left:1702.0px;top:531.2px;width:69.8px;height:22.7px;background:#e55d54;border-radius:6px 0 0 6px;"></div>
<div class="t" style="left:1686.9px;width:100px;text-align:center;top:533.1px;font-size:18px;color:#ffffff;font-weight:normal;letter-spacing:0.3px;-webkit-text-stroke:0.3px #fff;">68</div>
<div class="r" style="left:1823.0px;top:531.2px;width:102.7px;height:22.7px;background:#e9ecef;border-radius:6px;"></div>
<div class="r" style="left:1823.0px;top:531.2px;width:68.8px;height:22.7px;background:#85bf58;border-radius:6px 0 0 6px;"></div>
<div class="t" style="left:1807.4px;width:100px;text-align:center;top:533.1px;font-size:18px;color:#ffffff;font-weight:normal;letter-spacing:0.3px;-webkit-text-stroke:0.3px #fff;">67</div>
<div class="r" style="left:658.0px;top:569.1px;width:1252.0px;height:55.0px;background:#ffffff;"></div>
<svg class="r" style="left:688.0px;top:588.0px" width="18" height="18" viewBox="0 0 18 18"><circle cx="8.8" cy="9" r="8.7" fill="#0b7cf4"/><path d="M8.8 5.3 V12.7 M5.1 9 H12.5" stroke="#fff" stroke-width="1.7"/></svg>
<div class="t" style="left:743.0px;top:589.0px;font-size:17px;color:#4a4f55;font-weight:normal;letter-spacing:-0.4px;">tennis uomo</div>
<div class="t" style="left:1065.0px;width:200px;text-align:center;top:589.2px;font-size:17.5px;color:#50555b;font-weight:normal;letter-spacing:-0.55px;">3.600</div>
<div class="t" style="left:1227.0px;width:200px;text-align:center;top:589.2px;font-size:17.5px;color:#50555b;font-weight:normal;letter-spacing:-0.55px;">30.000.000</div>
<div class="t" style="left:1382.0px;width:200px;text-align:center;top:589.2px;font-size:17.5px;color:#50555b;font-weight:normal;letter-spacing:-0.55px;">€ 0,23</div>
<div class="r" style="left:1588.5px;top:598.6px;width:5.6px;height:13.2px;background:#3a80c6;"></div>
<div class="r" style="left:1596.1px;top:598.6px;width:5.6px;height:13.2px;background:#3a80c6;"></div>
<div class="r" style="left:1603.7px;top:598.6px;width:5.6px;height:13.2px;background:#3a80c6;"></div>
<div class="r" style="left:1611.3px;top:598.6px;width:5.6px;height:13.2px;background:#3a80c6;"></div>
<div class="r" style="left:1618.9px;top:596.5px;width:5.6px;height:15.3px;background:#3a80c6;"></div>
<div class="r" style="left:1626.5px;top:601.6px;width:5.6px;height:10.2px;background:#3a80c6;"></div>
<div class="r" style="left:1634.1px;top:598.6px;width:5.6px;height:13.2px;background:#3a80c6;"></div>
<div class="r" style="left:1641.7px;top:601.6px;width:5.6px;height:10.2px;background:#3a80c6;"></div>
<div class="r" style="left:1649.3px;top:596.5px;width:5.6px;height:15.3px;background:#3a80c6;"></div>
<div class="r" style="left:1656.9px;top:598.6px;width:5.6px;height:13.2px;background:#3a80c6;"></div>
<div class="r" style="left:1664.5px;top:596.5px;width:5.6px;height:15.3px;background:#3a80c6;"></div>
<div class="r" style="left:1672.1px;top:583.3px;width:5.6px;height:28.5px;background:#3a80c6;"></div>
<div class="r" style="left:1702.0px;top:586.2px;width:102.7px;height:22.7px;background:#e9ecef;border-radius:6px;"></div>
<div class="r" style="left:1702.0px;top:586.2px;width:70.9px;height:22.7px;background:#e55d54;border-radius:6px 0 0 6px;"></div>
<div class="t" style="left:1687.4px;width:100px;text-align:center;top:588.1px;font-size:18px;color:#ffffff;font-weight:normal;letter-spacing:0.3px;-webkit-text-stroke:0.3px #fff;">69</div>
<div class="r" style="left:1823.0px;top:586.2px;width:102.7px;height:22.7px;background:#e9ecef;border-radius:6px;"></div>
<div class="r" style="left:1823.0px;top:586.2px;width:56.5px;height:22.7px;background:#f3b95c;border-radius:6px 0 0 6px;"></div>
<div class="t" style="left:1801.2px;width:100px;text-align:center;top:588.1px;font-size:18px;color:#ffffff;font-weight:normal;letter-spacing:0.3px;-webkit-text-stroke:0.3px #fff;">55</div>
<div class="r" style="left:658.0px;top:624.1px;width:1252.0px;height:55.0px;background:#f5f6f9;"></div>
<svg class="r" style="left:688.0px;top:643.0px" width="18" height="18" viewBox="0 0 18 18"><circle cx="8.8" cy="9" r="8.7" fill="#0b7cf4"/><path d="M8.8 5.3 V12.7 M5.1 9 H12.5" stroke="#fff" stroke-width="1.7"/></svg>
<div class="t" style="left:743.0px;top:644.0px;font-size:17px;color:#4a4f55;font-weight:normal;letter-spacing:-0.4px;">scarpe nike alte</div>
<div class="t" style="left:1065.0px;width:200px;text-align:center;top:644.2px;font-size:17.5px;color:#50555b;font-weight:normal;letter-spacing:-0.55px;">3.600</div>
<div class="t" style="left:1227.0px;width:200px;text-align:center;top:644.2px;font-size:17.5px;color:#50555b;font-weight:normal;letter-spacing:-0.55px;">49</div>
<div class="t" style="left:1382.0px;width:200px;text-align:center;top:644.2px;font-size:17.5px;color:#50555b;font-weight:normal;letter-spacing:-0.55px;">€ 0,13</div>
<div class="r" style="left:1588.5px;top:645.6px;width:5.6px;height:21.2px;background:#3a80c6;"></div>
<div class="r" style="left:1596.1px;top:652.9px;width:5.6px;height:13.9px;background:#3a80c6;"></div>
<div class="r" style="left:1603.7px;top:650.1px;width:5.6px;height:16.7px;background:#3a80c6;"></div>
<div class="r" style="left:1611.3px;top:650.1px;width:5.6px;height:16.7px;background:#3a80c6;"></div>
<div class="r" style="left:1618.9px;top:652.9px;width:5.6px;height:13.9px;background:#3a80c6;"></div>
<div class="r" style="left:1626.5px;top:655.8px;width:5.6px;height:11.0px;background:#3a80c6;"></div>
<div class="r" style="left:1634.1px;top:655.8px;width:5.6px;height:11.0px;background:#3a80c6;"></div>
<div class="r" style="left:1641.7px;top:650.1px;width:5.6px;height:16.7px;background:#3a80c6;"></div>
<div class="r" style="left:1649.3px;top:639.9px;width:5.6px;height:26.9px;background:#3a80c6;"></div>
<div class="r" style="left:1656.9px;top:639.9px;width:5.6px;height:26.9px;background:#3a80c6;"></div>
<div class="r" style="left:1664.5px;top:639.9px;width:5.6px;height:26.9px;background:#3a80c6;"></div>
<div class="r" style="left:1672.1px;top:639.9px;width:5.6px;height:26.9px;background:#3a80c6;"></div>
<div class="r" style="left:1702.0px;top:641.2px;width:102.7px;height:22.7px;background:#e9ecef;border-radius:6px;"></div>
<div class="r" style="left:1702.0px;top:641.2px;width:63.7px;height:22.7px;background:#e55d54;border-radius:6px 0 0 6px;"></div>
<div class="t" style="left:1683.8px;width:100px;text-align:center;top:643.1px;font-size:18px;color:#ffffff;font-weight:normal;letter-spacing:0.3px;-webkit-text-stroke:0.3px #fff;">62</div>
<div class="r" style="left:1823.0px;top:641.2px;width:102.7px;height:22.7px;background:#e9ecef;border-radius:6px;"></div>
<div class="r" style="left:1823.0px;top:641.2px;width:73.9px;height:22.7px;background:#85bf58;border-radius:6px 0 0 6px;"></div>
<div class="t" style="left:1810.0px;width:100px;text-align:center;top:643.1px;font-size:18px;color:#ffffff;font-weight:normal;letter-spacing:0.3px;-webkit-text-stroke:0.3px #fff;">72</div>
<div class="r" style="left:658.0px;top:679.1px;width:1252.0px;height:55.0px;background:#ffffff;"></div>
<svg class="r" style="left:688.0px;top:698.0px" width="18" height="18" viewBox="0 0 18 18"><circle cx="8.8" cy="9" r="8.7" fill="#0b7cf4"/><path d="M8.8 5.3 V12.7 M5.1 9 H12.5" stroke="#fff" stroke-width="1.7"/></svg>
<div class="t" style="left:743.0px;top:699.0px;font-size:17px;color:#4a4f55;font-weight:normal;letter-spacing:-0.4px;">scarpe da tennis donna</div>
<div class="t" style="left:1065.0px;width:200px;text-align:center;top:699.2px;font-size:17.5px;color:#50555b;font-weight:normal;letter-spacing:-0.55px;">3.600</div>
<div class="t" style="left:1227.0px;width:200px;text-align:center;top:699.2px;font-size:17.5px;color:#50555b;font-weight:normal;letter-spacing:-0.55px;">13.300.000</div>
<div class="t" style="left:1382.0px;width:200px;text-align:center;top:699.2px;font-size:17.5px;color:#50555b;font-weight:normal;letter-spacing:-0.55px;">€ 0,36</div>
<div class="r" style="left:1588.5px;top:699.0px;width:5.6px;height:22.8px;background:#3a80c6;"></div>
<div class="r" style="left:1596.1px;top:699.0px;width:5.6px;height:22.8px;background:#3a80c6;"></div>
<div class="r" style="left:1603.7px;top:692.9px;width:5.6px;height:28.9px;background:#3a80c6;"></div>
<div class="r" style="left:1611.3px;top:692.9px;width:5.6px;height:28.9px;background:#3a80c6;"></div>
<div class="r" style="left:1618.9px;top:692.9px;width:5.6px;height:28.9px;background:#3a80c6;"></div>
<div class="r" style="left:1626.5px;top:714.3px;width:5.6px;height:7.5px;background:#3a80c6;"></div>
<div class="r" style="left:1634.1px;top:713.0px;width:5.6px;height:8.8px;background:#3a80c6;"></div>
<div class="r" style="left:1641.7px;top:708.2px;width:5.6px;height:13.6px;background:#3a80c6;"></div>
<div class="r" style="left:1649.3px;top:692.9px;width:5.6px;height:28.9px;background:#3a80c6;"></div>
<div class="r" style="left:1656.9px;top:699.0px;width:5.6px;height:22.8px;background:#3a80c6;"></div>
<div class="r" style="left:1664.5px;top:702.4px;width:5.6px;height:19.4px;background:#3a80c6;"></div>
<div class="r" style="left:1672.1px;top:708.2px;width:5.6px;height:13.6px;background:#3a80c6;"></div>
<div class="r" style="left:1702.0px;top:696.2px;width:102.7px;height:22.7px;background:#e9ecef;border-radius:6px;"></div>
<div class="r" style="left:1702.0px;top:696.2px;width:72.9px;height:22.7px;background:#e55d54;border-radius:6px 0 0 6px;"></div>
<div class="t" style="left:1688.5px;width:100px;text-align:center;top:698.1px;font-size:18px;color:#ffffff;font-weight:normal;letter-spacing:0.3px;-webkit-text-stroke:0.3px #fff;">71</div>
<div class="r" style="left:1823.0px;top:696.2px;width:102.7px;height:22.7px;background:#e9ecef;border-radius:6px;"></div>
<div class="r" style="left:1823.0px;top:696.2px;width:52.4px;height:22.7px;background:#f3b95c;border-radius:6px 0 0 6px;"></div>
<div class="t" style="left:1799.2px;width:100px;text-align:center;top:698.1px;font-size:18px;color:#ffffff;font-weight:normal;letter-spacing:0.3px;-webkit-text-stroke:0.3px #fff;">51</div>
<div class="r" style="left:658.0px;top:734.1px;width:1252.0px;height:55.0px;background:#f5f6f9;"></div>
<svg class="r" style="left:688.0px;top:753.0px" width="18" height="18" viewBox="0 0 18 18"><circle cx="8.8" cy="9" r="8.7" fill="#0b7cf4"/><path d="M8.8 5.3 V12.7 M5.1 9 H12.5" stroke="#fff" stroke-width="1.7"/></svg>
<div class="t" style="left:743.0px;top:754.0px;font-size:17px;color:#4a4f55;font-weight:normal;letter-spacing:-0.4px;">scarpe da tennis uomo</div>
<div class="t" style="left:1065.0px;width:200px;text-align:center;top:754.2px;font-size:17.5px;color:#50555b;font-weight:normal;letter-spacing:-0.55px;">3.600</div>
<div class="t" style="left:1227.0px;width:200px;text-align:center;top:754.2px;font-size:17.5px;color:#50555b;font-weight:normal;letter-spacing:-0.55px;">9.580.000</div>
<div class="t" style="left:1382.0px;width:200px;text-align:center;top:754.2px;font-size:17.5px;color:#50555b;font-weight:normal;letter-spacing:-0.55px;">€ 0,30</div>
<div class="r" style="left:1588.5px;top:749.3px;width:5.6px;height:27.5px;background:#3a80c6;"></div>
<div class="r" style="left:1596.1px;top:755.0px;width:5.6px;height:21.8px;background:#3a80c6;"></div>
<div class="r" style="left:1603.7px;top:749.3px;width:5.6px;height:27.5px;background:#3a80c6;"></div>
<div class="r" style="left:1611.3px;top:755.0px;width:5.6px;height:21.8px;background:#3a80c6;"></div>
<div class="r" style="left:1618.9px;top:749.3px;width:5.6px;height:27.5px;background:#3a80c6;"></div>
<div class="r" style="left:1626.5px;top:765.2px;width:5.6px;height:11.6px;background:#3a80c6;"></div>
<div class="r" style="left:1634.1px;top:765.2px;width:5.6px;height:11.6px;background:#3a80c6;"></div>
<div class="r" style="left:1641.7px;top:765.2px;width:5.6px;height:11.6px;background:#3a80c6;"></div>
<div class="r" style="left:1649.3px;top:749.3px;width:5.6px;height:27.5px;background:#3a80c6;"></div>
<div class="r" style="left:1656.9px;top:755.0px;width:5.6px;height:21.8px;background:#3a80c6;"></div>
<div class="r" style="left:1664.5px;top:749.3px;width:5.6px;height:27.5px;background:#3a80c6;"></div>
<div class="r" style="left:1672.1px;top:755.0px;width:5.6px;height:21.8px;background:#3a80c6;"></div>
<div class="r" style="left:1702.0px;top:751.2px;width:102.7px;height:22.7px;background:#e9ecef;border-radius:6px;"></div>
<div class="r" style="left:1702.0px;top:751.2px;width:70.9px;height:22.7px;background:#e55d54;border-radius:6px 0 0 6px;"></div>
<div class="t" style="left:1687.4px;width:100px;text-align:center;top:753.1px;font-size:18px;color:#ffffff;font-weight:normal;letter-spacing:0.3px;-webkit-text-stroke:0.3px #fff;">69</div>
<div class="r" style="left:1823.0px;top:751.2px;width:102.7px;height:22.7px;background:#e9ecef;border-radius:6px;"></div>
<div class="r" style="left:1823.0px;top:751.2px;width:53.4px;height:22.7px;background:#f3b95c;border-radius:6px 0 0 6px;"></div>
<div class="t" style="left:1799.7px;width:100px;text-align:center;top:753.1px;font-size:18px;color:#ffffff;font-weight:normal;letter-spacing:0.3px;-webkit-text-stroke:0.3px #fff;">52</div>
<div class="r" style="left:658.0px;top:789.1px;width:1252.0px;height:55.0px;background:#ffffff;"></div>
<svg class="r" style="left:688.0px;top:808.0px" width="18" height="18" viewBox="0 0 18 18"><circle cx="8.8" cy="9" r="8.7" fill="#0b7cf4"/><path d="M8.8 5.3 V12.7 M5.1 9 H12.5" stroke="#fff" stroke-width="1.7"/></svg>
<div class="t" style="left:743.0px;top:809.0px;font-size:17px;color:#4a4f55;font-weight:normal;letter-spacing:-0.4px;">scarpette adidas uomo</div>
<div class="t" style="left:1065.0px;width:200px;text-align:center;top:809.2px;font-size:17.5px;color:#50555b;font-weight:normal;letter-spacing:-0.55px;">3.600</div>
<div class="t" style="left:1227.0px;width:200px;text-align:center;top:809.2px;font-size:17.5px;color:#50555b;font-weight:normal;letter-spacing:-0.55px;">859.000</div>
<div class="t" style="left:1382.0px;width:200px;text-align:center;top:809.2px;font-size:17.5px;color:#50555b;font-weight:normal;letter-spacing:-0.55px;">€ 0,30</div>
<div class="r" style="left:1588.5px;top:803.1px;width:5.6px;height:28.7px;background:#3a80c6;"></div>
<div class="r" style="left:1596.1px;top:803.1px;width:5.6px;height:28.7px;background:#3a80c6;"></div>
<div class="r" style="left:1603.7px;top:803.1px;width:5.6px;height:28.7px;background:#3a80c6;"></div>
<div class="r" style="left:1611.3px;top:803.1px;width:5.6px;height:28.7px;background:#3a80c6;"></div>
<div class="r" style="left:1618.9px;top:803.1px;width:5.6px;height:28.7px;background:#3a80c6;"></div>
<div class="r" style="left:1626.5px;top:803.1px;width:5.6px;height:28.7px;background:#3a80c6;"></div>
<div class="r" style="left:1634.1px;top:803.1px;width:5.6px;height:28.7px;background:#3a80c6;"></div>
<div class="r" style="left:1641.7px;top:803.1px;width:5.6px;height:28.7px;background:#3a80c6;"></div>
<div class="r" style="left:1649.3px;top:812.2px;width:5.6px;height:19.6px;background:#3a80c6;"></div>
<div class="r" style="left:1656.9px;top:812.2px;width:5.6px;height:19.6px;background:#3a80c6;"></div>
<div class="r" style="left:1664.5px;top:809.0px;width:5.6px;height:22.8px;background:#3a80c6;"></div>
<div class="r" style="left:1672.1px;top:809.0px;width:5.6px;height:22.8px;background:#3a80c6;"></div>
<div class="r" style="left:1702.0px;top:806.2px;width:102.7px;height:22.7px;background:#e9ecef;border-radius:6px;"></div>
<div class="r" style="left:1702.0px;top:806.2px;width:64.7px;height:22.7px;background:#e55d54;border-radius:6px 0 0 6px;"></div>
<div class="t" style="left:1684.4px;width:100px;text-align:center;top:808.1px;font-size:18px;color:#ffffff;font-weight:normal;letter-spacing:0.3px;-webkit-text-stroke:0.3px #fff;">63</div>
<div class="r" style="left:1823.0px;top:806.2px;width:102.7px;height:22.7px;background:#e9ecef;border-radius:6px;"></div>
<div class="r" style="left:1823.0px;top:806.2px;width:71.9px;height:22.7px;background:#85bf58;border-radius:6px 0 0 6px;"></div>
<div class="t" style="left:1808.9px;width:100px;text-align:center;top:808.1px;font-size:18px;color:#ffffff;font-weight:normal;letter-spacing:0.3px;-webkit-text-stroke:0.3px #fff;">70</div>
<div class="r" style="left:658.0px;top:844.1px;width:1252.0px;height:55.0px;background:#f5f6f9;"></div>
<svg class="r" style="left:688.0px;top:863.0px" width="18" height="18" viewBox="0 0 18 18"><circle cx="8.8" cy="9" r="8.7" fill="#0b7cf4"/><path d="M8.8 5.3 V12.7 M5.1 9 H12.5" stroke="#fff" stroke-width="1.7"/></svg>
<div class="t" style="left:743.0px;top:864.0px;font-size:17px;color:#4a4f55;font-weight:normal;letter-spacing:-0.4px;">scarpe tennis donna</div>
<div class="t" style="left:1065.0px;width:200px;text-align:center;top:864.2px;font-size:17.5px;color:#50555b;font-weight:normal;letter-spacing:-0.55px;">2.900</div>
<div class="t" style="left:1227.0px;width:200px;text-align:center;top:864.2px;font-size:17.5px;color:#50555b;font-weight:normal;letter-spacing:-0.55px;">9.920.000</div>
<div class="t" style="left:1382.0px;width:200px;text-align:center;top:864.2px;font-size:17.5px;color:#50555b;font-weight:normal;letter-spacing:-0.55px;">€ 0,27</div>
<div class="r" style="left:1588.5px;top:865.6px;width:5.6px;height:21.2px;background:#3a80c6;"></div>
<div class="r" style="left:1596.1px;top:865.6px;width:5.6px;height:21.2px;background:#3a80c6;"></div>
<div class="r" style="left:1603.7px;top:859.4px;width:5.6px;height:27.4px;background:#3a80c6;"></div>
<div class="r" style="left:1611.3px;top:859.4px;width:5.6px;height:27.4px;background:#3a80c6;"></div>
<div class="r" style="left:1618.9px;top:865.6px;width:5.6px;height:21.2px;background:#3a80c6;"></div>
<div class="r" style="left:1626.5px;top:875.8px;width:5.6px;height:11.0px;background:#3a80c6;"></div>
<div class="r" style="left:1634.1px;top:875.8px;width:5.6px;height:11.0px;background:#3a80c6;"></div>
<div class="r" style="left:1641.7px;top:872.6px;width:5.6px;height:14.2px;background:#3a80c6;"></div>
<div class="r" style="left:1649.3px;top:865.6px;width:5.6px;height:21.2px;background:#3a80c6;"></div>
<div class="r" style="left:1656.9px;top:865.6px;width:5.6px;height:21.2px;background:#3a80c6;"></div>
<div class="r" style="left:1664.5px;top:869.6px;width:5.6px;height:17.2px;background:#3a80c6;"></div>
<div class="r" style="left:1672.1px;top:875.8px;width:5.6px;height:11.0px;background:#3a80c6;"></div>
<div class="r" style="left:1702.0px;top:861.2px;width:102.7px;height:22.7px;background:#e9ecef;border-radius:6px;"></div>
<div class="r" style="left:1702.0px;top:861.2px;width:71.9px;height:22.7px;background:#e55d54;border-radius:6px 0 0 6px;"></div>
<div class="t" style="left:1687.9px;width:100px;text-align:center;top:863.1px;font-size:18px;color:#ffffff;font-weight:normal;letter-spacing:0.3px;-webkit-text-stroke:0.3px #fff;">70</div>
<div class="r" style="left:1823.0px;top:861.2px;width:102.7px;height:22.7px;background:#e9ecef;border-radius:6px;"></div>
<div class="r" style="left:1823.0px;top:861.2px;width:57.5px;height:22.7px;background:#85bf58;border-radius:6px 0 0 6px;"></div>
<div class="t" style="left:1801.8px;width:100px;text-align:center;top:863.1px;font-size:18px;color:#ffffff;font-weight:normal;letter-spacing:0.3px;-webkit-text-stroke:0.3px #fff;">56</div>
<div class="r" style="left:658.0px;top:899.1px;width:1252.0px;height:55.0px;background:#ffffff;"></div>
<svg class="r" style="left:688.0px;top:918.0px" width="18" height="18" viewBox="0 0 18 18"><circle cx="8.8" cy="9" r="8.7" fill="#0b7cf4"/><path d="M8.8 5.3 V12.7 M5.1 9 H12.5" stroke="#fff" stroke-width="1.7"/></svg>
<div class="t" style="left:743.0px;top:919.0px;font-size:17px;color:#4a4f55;font-weight:normal;letter-spacing:-0.4px;">scarpette nike uomo</div>
<div class="t" style="left:1065.0px;width:200px;text-align:center;top:919.2px;font-size:17.5px;color:#50555b;font-weight:normal;letter-spacing:-0.55px;">2.900</div>
<div class="t" style="left:1227.0px;width:200px;text-align:center;top:919.2px;font-size:17.5px;color:#50555b;font-weight:normal;letter-spacing:-0.55px;">905.000</div>
<div class="t" style="left:1382.0px;width:200px;text-align:center;top:919.2px;font-size:17.5px;color:#50555b;font-weight:normal;letter-spacing:-0.55px;">€ 0,25</div>
<div class="r" style="left:1588.5px;top:922.8px;width:5.6px;height:19.0px;background:#3a80c6;"></div>
<div class="r" style="left:1596.1px;top:919.5px;width:5.6px;height:22.3px;background:#3a80c6;"></div>
<div class="r" style="left:1603.7px;top:913.4px;width:5.6px;height:28.4px;background:#3a80c6;"></div>
<div class="r" style="left:1611.3px;top:922.8px;width:5.6px;height:19.0px;background:#3a80c6;"></div>
<div class="r" style="left:1618.9px;top:919.5px;width:5.6px;height:22.3px;background:#3a80c6;"></div>
<div class="r" style="left:1626.5px;top:919.5px;width:5.6px;height:22.3px;background:#3a80c6;"></div>
<div class="r" style="left:1634.1px;top:922.8px;width:5.6px;height:19.0px;background:#3a80c6;"></div>
<div class="r" style="left:1641.7px;top:919.5px;width:5.6px;height:22.3px;background:#3a80c6;"></div>
<div class="r" style="left:1649.3px;top:922.8px;width:5.6px;height:19.0px;background:#3a80c6;"></div>
<div class="r" style="left:1656.9px;top:922.8px;width:5.6px;height:19.0px;background:#3a80c6;"></div>
<div class="r" style="left:1664.5px;top:922.8px;width:5.6px;height:19.0px;background:#3a80c6;"></div>
<div class="r" style="left:1672.1px;top:922.8px;width:5.6px;height:19.0px;background:#3a80c6;"></div>
<div class="r" style="left:1702.0px;top:916.2px;width:102.7px;height:22.7px;background:#e9ecef;border-radius:6px;"></div>
<div class="r" style="left:1702.0px;top:916.2px;width:65.7px;height:22.7px;background:#e55d54;border-radius:6px 0 0 6px;"></div>
<div class="t" style="left:1684.9px;width:100px;text-align:center;top:918.1px;font-size:18px;color:#ffffff;font-weight:normal;letter-spacing:0.3px;-webkit-text-stroke:0.3px #fff;">64</div>
<div class="r" style="left:1823.0px;top:916.2px;width:102.7px;height:22.7px;background:#e9ecef;border-radius:6px;"></div>
<div class="r" style="left:1823.0px;top:916.2px;width:70.9px;height:22.7px;background:#85bf58;border-radius:6px 0 0 6px;"></div>
<div class="t" style="left:1808.4px;width:100px;text-align:center;top:918.1px;font-size:18px;color:#ffffff;font-weight:normal;letter-spacing:0.3px;-webkit-text-stroke:0.3px #fff;">69</div>
<div class="r" style="left:658.0px;top:954.1px;width:1252.0px;height:55.0px;background:#f5f6f9;"></div>
<svg class="r" style="left:688.0px;top:973.0px" width="18" height="18" viewBox="0 0 18 18"><circle cx="8.8" cy="9" r="8.7" fill="#0b7cf4"/><path d="M8.8 5.3 V12.7 M5.1 9 H12.5" stroke="#fff" stroke-width="1.7"/></svg>
<div class="t" style="left:743.0px;top:974.0px;font-size:17px;color:#4a4f55;font-weight:normal;letter-spacing:-0.4px;">scarpe nike uomo</div>
<div class="t" style="left:1065.0px;width:200px;text-align:center;top:974.2px;font-size:17.5px;color:#50555b;font-weight:normal;letter-spacing:-0.55px;">2.400</div>
<div class="t" style="left:1227.0px;width:200px;text-align:center;top:974.2px;font-size:17.5px;color:#50555b;font-weight:normal;letter-spacing:-0.55px;">8.910.000</div>
<div class="t" style="left:1382.0px;width:200px;text-align:center;top:974.2px;font-size:17.5px;color:#50555b;font-weight:normal;letter-spacing:-0.55px;">€ 0,26</div>
<div class="r" style="left:1588.5px;top:978.0px;width:5.6px;height:18.8px;background:#3a80c6;"></div>
<div class="r" style="left:1596.1px;top:978.0px;width:5.6px;height:18.8px;background:#3a80c6;"></div>
<div class="r" style="left:1603.7px;top:975.1px;width:5.6px;height:21.7px;background:#3a80c6;"></div>
<div class="r" style="left:1611.3px;top:968.9px;width:5.6px;height:27.9px;background:#3a80c6;"></div>
<div class="r" style="left:1618.9px;top:968.9px;width:5.6px;height:27.9px;background:#3a80c6;"></div>
<div class="r" style="left:1626.5px;top:982.3px;width:5.6px;height:14.5px;background:#3a80c6;"></div>
<div class="r" style="left:1634.1px;top:975.1px;width:5.6px;height:21.7px;background:#3a80c6;"></div>
<div class="r" style="left:1641.7px;top:978.0px;width:5.6px;height:18.8px;background:#3a80c6;"></div>
<div class="r" style="left:1649.3px;top:975.1px;width:5.6px;height:21.7px;background:#3a80c6;"></div>
<div class="r" style="left:1656.9px;top:978.0px;width:5.6px;height:18.8px;background:#3a80c6;"></div>
<div class="r" style="left:1664.5px;top:978.0px;width:5.6px;height:18.8px;background:#3a80c6;"></div>
<div class="r" style="left:1672.1px;top:978.0px;width:5.6px;height:18.8px;background:#3a80c6;"></div>
<div class="r" style="left:1702.0px;top:971.2px;width:102.7px;height:22.7px;background:#e9ecef;border-radius:6px;"></div>
<div class="r" style="left:1702.0px;top:971.2px;width:71.9px;height:22.7px;background:#e55d54;border-radius:6px 0 0 6px;"></div>
<div class="t" style="left:1687.9px;width:100px;text-align:center;top:973.1px;font-size:18px;color:#ffffff;font-weight:normal;letter-spacing:0.3px;-webkit-text-stroke:0.3px #fff;">70</div>
<div class="r" style="left:1823.0px;top:971.2px;width:102.7px;height:22.7px;background:#e9ecef;border-radius:6px;"></div>
<div class="r" style="left:1823.0px;top:971.2px;width:63.7px;height:22.7px;background:#85bf58;border-radius:6px 0 0 6px;"></div>
<div class="t" style="left:1804.8px;width:100px;text-align:center;top:973.1px;font-size:18px;color:#ffffff;font-weight:normal;letter-spacing:0.3px;-webkit-text-stroke:0.3px #fff;">62</div>
<div class="r" style="left:658.0px;top:1009.1px;width:1252.0px;height:55.0px;background:#ffffff;"></div>
<svg class="r" style="left:688.0px;top:1028.0px" width="18" height="18" viewBox="0 0 18 18"><circle cx="8.8" cy="9" r="8.7" fill="#0b7cf4"/><path d="M8.8 5.3 V12.7 M5.1 9 H12.5" stroke="#fff" stroke-width="1.7"/></svg>
<div class="t" style="left:743.0px;top:1029.0px;font-size:17px;color:#4a4f55;font-weight:normal;letter-spacing:-0.4px;">scarpe nike uomo scontate</div>
<div class="t" style="left:1065.0px;width:200px;text-align:center;top:1029.2px;font-size:17.5px;color:#50555b;font-weight:normal;letter-spacing:-0.55px;">1.900</div>
<div class="t" style="left:1227.0px;width:200px;text-align:center;top:1029.2px;font-size:17.5px;color:#50555b;font-weight:normal;letter-spacing:-0.55px;">50</div>
<div class="t" style="left:1382.0px;width:200px;text-align:center;top:1029.2px;font-size:17.5px;color:#50555b;font-weight:normal;letter-spacing:-0.55px;">€ 0,26</div>
<div class="r" style="left:1588.5px;top:1029.3px;width:5.6px;height:22.5px;background:#3a80c6;"></div>
<div class="r" style="left:1596.1px;top:1034.4px;width:5.6px;height:17.4px;background:#3a80c6;"></div>
<div class="r" style="left:1603.7px;top:1029.3px;width:5.6px;height:22.5px;background:#3a80c6;"></div>
<div class="r" style="left:1611.3px;top:1023.9px;width:5.6px;height:27.9px;background:#3a80c6;"></div>
<div class="r" style="left:1618.9px;top:1023.9px;width:5.6px;height:27.9px;background:#3a80c6;"></div>
<div class="r" style="left:1626.5px;top:1043.2px;width:5.6px;height:8.6px;background:#3a80c6;"></div>
<div class="r" style="left:1634.1px;top:1041.9px;width:5.6px;height:9.9px;background:#3a80c6;"></div>
<div class="r" style="left:1641.7px;top:1039.2px;width:5.6px;height:12.6px;background:#3a80c6;"></div>
<div class="r" style="left:1649.3px;top:1037.3px;width:5.6px;height:14.5px;background:#3a80c6;"></div>
<div class="r" style="left:1656.9px;top:1037.3px;width:5.6px;height:14.5px;background:#3a80c6;"></div>
<div class="r" style="left:1664.5px;top:1029.3px;width:5.6px;height:22.5px;background:#3a80c6;"></div>
<div class="r" style="left:1672.1px;top:1029.3px;width:5.6px;height:22.5px;background:#3a80c6;"></div>
<div class="r" style="left:1702.0px;top:1026.2px;width:102.7px;height:22.7px;background:#e9ecef;border-radius:6px;"></div>
<div class="r" style="left:1702.0px;top:1026.2px;width:62.6px;height:22.7px;background:#e55d54;border-radius:6px 0 0 6px;"></div>
<div class="t" style="left:1683.3px;width:100px;text-align:center;top:1028.1px;font-size:18px;color:#ffffff;font-weight:normal;letter-spacing:0.3px;-webkit-text-stroke:0.3px #fff;">61</div>
<div class="r" style="left:1823.0px;top:1026.2px;width:102.7px;height:22.7px;background:#e9ecef;border-radius:6px;"></div>
<div class="r" style="left:1823.0px;top:1026.2px;width:71.9px;height:22.7px;background:#85bf58;border-radius:6px 0 0 6px;"></div>
<div class="t" style="left:1808.9px;width:100px;text-align:center;top:1028.1px;font-size:18px;color:#ffffff;font-weight:normal;letter-spacing:0.3px;-webkit-text-stroke:0.3px #fff;">70</div>
<div class="r" style="left:658.0px;top:1064.1px;width:1252.0px;height:55.0px;background:#f5f6f9;"></div>
<div class="r" style="left:1588.5px;top:1075.8px;width:5.6px;height:31.0px;background:#3a80c6;"></div>
<div class="r" style="left:1596.1px;top:1092.8px;width:5.6px;height:14.0px;background:#3a80c6;"></div>
<div class="r" style="left:1603.7px;top:1092.8px;width:5.6px;height:14.0px;background:#3a80c6;"></div>
<div class="r" style="left:1611.3px;top:1092.8px;width:5.6px;height:14.0px;background:#3a80c6;"></div>
<div class="r" style="left:1618.9px;top:1092.8px;width:5.6px;height:14.0px;background:#3a80c6;"></div>
<div class="r" style="left:1626.5px;top:1092.8px;width:5.6px;height:14.0px;background:#3a80c6;"></div>
<div class="r" style="left:1634.1px;top:1075.8px;width:5.6px;height:31.0px;background:#3a80c6;"></div>
<div class="r" style="left:1641.7px;top:1092.8px;width:5.6px;height:14.0px;background:#3a80c6;"></div>
<div class="r" style="left:1649.3px;top:1092.8px;width:5.6px;height:14.0px;background:#3a80c6;"></div>
<div class="r" style="left:1656.9px;top:1092.8px;width:5.6px;height:14.0px;background:#3a80c6;"></div>
<div class="r" style="left:1664.5px;top:1092.8px;width:5.6px;height:14.0px;background:#3a80c6;"></div>
<div class="r" style="left:1672.1px;top:1075.8px;width:5.6px;height:31.0px;background:#3a80c6;"></div>
<div class="r" style="left:658.0px;top:404.0px;width:1252.0px;height:1.0px;background:#d9dce1;"></div>
<div class="r" style="left:658.0px;top:459.0px;width:1252.0px;height:1.0px;background:#d9dce1;"></div>
<div class="r" style="left:658.0px;top:514.0px;width:1252.0px;height:1.0px;background:#d9dce1;"></div>
<div class="r" style="left:658.0px;top:569.0px;width:1252.0px;height:1.0px;background:#d9dce1;"></div>
<div class="r" style="left:658.0px;top:624.0px;width:1252.0px;height:1.0px;background:#d9dce1;"></div>
<div class="r" style="left:658.0px;top:679.0px;width:1252.0px;height:1.0px;background:#d9dce1;"></div>
<div class="r" style="left:658.0px;top:734.0px;width:1252.0px;height:1.0px;background:#d9dce1;"></div>
<div class="r" style="left:658.0px;top:789.0px;width:1252.0px;height:1.0px;background:#d9dce1;"></div>
<div class="r" style="left:658.0px;top:844.0px;width:1252.0px;height:1.0px;background:#d9dce1;"></div>
<div class="r" style="left:658.0px;top:899.0px;width:1252.0px;height:1.0px;background:#d9dce1;"></div>
<div class="r" style="left:658.0px;top:954.0px;width:1252.0px;height:1.0px;background:#d9dce1;"></div>
<div class="r" style="left:658.0px;top:1009.0px;width:1252.0px;height:1.0px;background:#d9dce1;"></div>
<div class="r" style="left:658.0px;top:1064.0px;width:1252.0px;height:1.0px;background:#d9dce1;"></div>
<div class="r" style="left:658.0px;top:348.0px;width:1252.0px;height:5.0px;background:linear-gradient(rgba(0,0,0,0.10), rgba(0,0,0,0));"></div>
<div class="r" style="left:1900.3px;top:353.7px;width:5.7px;height:32.9px;background:#0b7cf4;"></div>
<div class="r" style="left:1910.0px;top:156.0px;width:10.0px;height:924.0px;background:#eef0f4;"></div>
</body></html>
